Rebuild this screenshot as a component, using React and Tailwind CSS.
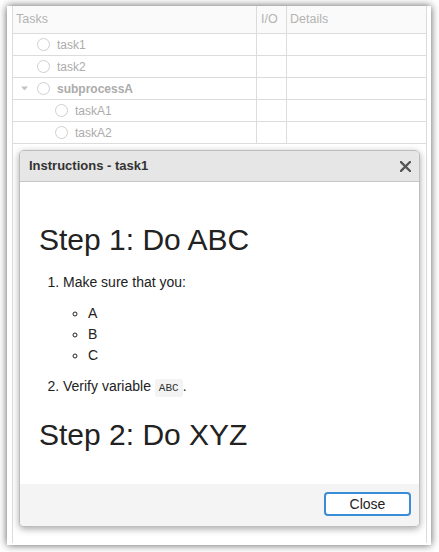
import React from "react";

const rows = [
  { name: "task1", level: 0 },
  { name: "task2", level: 0 },
  { name: "subprocessA", level: 0, group: true },
  { name: "taskA1", level: 1 },
  { name: "taskA2", level: 1 },
];

const TaskRow = ({ row }) => (
  <div className="flex h-[22px] border-b border-[#dcdcdc]">
    <div
      className={`flex w-[244px] items-center border-r border-[#dcdcdc] ${
        row.level === 1 ? "pl-[26px]" : "pl-[8px]"
      }`}
    >
      <div className="flex w-[16px] items-center">
        {row.group && (
          <svg width="7" height="5" viewBox="0 0 7 5">
            <path d="M0 0.5 L7 0.5 L3.5 4.5 Z" fill="#c4c4c4" />
          </svg>
        )}
      </div>
      <span className="h-[13px] w-[13px] rounded-full border border-[#cfcfcf] bg-white" />
      <span
        className={`ml-[7px] text-[12px] text-[#ababab] ${
          row.group ? "font-bold" : ""
        }`}
      >
        {row.name}
      </span>
    </div>
    <div className="w-[30px] border-r border-[#dcdcdc]" />
    <div className="flex-1" />
  </div>
);

const Modal = () => (
  <div className="absolute left-[12px] top-[144px] flex h-[377px] w-[401px] flex-col overflow-hidden rounded-[5px] border border-[#bdbdbd] bg-white shadow-[0_2px_7px_rgba(0,0,0,0.35)]">
    {/* header */}
    <div className="flex h-[31px] shrink-0 items-center justify-between border-b border-[#c6c6c6] bg-[#e6e6e6] pl-[9px] pr-[8px]">
      <span className="text-[13px] font-bold text-[#333]">Instructions - task1</span>
      <svg width="11" height="11" viewBox="0 0 11 11">
        <path d="M1 1 L10 10 M10 1 L1 10" stroke="#555" strokeWidth="2.3" strokeLinecap="square" />
      </svg>
    </div>

    {/* body */}
    <div className="flex-1 pl-[19px] pr-[20px] pt-[41px] text-[#222]">
      <h1 className="text-[30px] leading-[33px]">Step 1: Do ABC</h1>
      <ol className="mt-[16px] list-decimal pl-[24px] text-[14px] leading-[21px]">
        <li>
          Make sure that you:
          <ul className="my-[10px] list-[circle] pl-[25px]">
            <li>A</li>
            <li>B</li>
            <li>C</li>
          </ul>
        </li>
        <li>
          Verify variable{" "}
          <code className="rounded-[3px] bg-[#f3f3f3] px-[4px] py-[3px] font-['Liberation_Mono',monospace] text-[11px] text-[#333]">
            ABC
          </code>
          .
        </li>
      </ol>
      <h1 className="mt-[19px] text-[30px] leading-[33px]">Step 2: Do XYZ</h1>
    </div>

    {/* footer */}
    <div className="flex h-[42px] shrink-0 items-start justify-end bg-[#f4f4f4] pr-[8px] pt-[8px]">
      <button className="flex h-[24px] w-[87px] items-center justify-center rounded-[4px] border-2 border-[#3a8cd6] bg-white text-[14px] text-[#222]">
        Close
      </button>
    </div>
  </div>
);

export default function App() {
  return (
    <div className="h-[552px] w-[439px] bg-white pl-[7px] pt-[6px] font-['Liberation_Sans',Arial,sans-serif]">
      <div className="relative flex h-[539px] w-[424px] flex-col bg-white pb-[2px] pl-[5px] pr-[4px] shadow-[0_0_8px_rgba(0,0,0,0.65)]">
        <div className="flex-1 border-x border-[#dcdcdc]">
          {/* header row */}
          <div className="flex h-[28px] border-b border-[#dcdcdc] bg-[#fafafa] text-[12.5px] text-[#b3b3b3]">
            <div className="flex w-[244px] items-center border-r border-[#dcdcdc] pl-[3px]">Tasks</div>
            <div className="flex w-[30px] items-center border-r border-[#dcdcdc] pl-[4px]">I/O</div>
            <div className="flex flex-1 items-center pl-[3px]">Details</div>
          </div>
          {rows.map((row) => (
            <TaskRow key={row.name} row={row} />
          ))}
        </div>
        <Modal />
      </div>
    </div>
  );
}
